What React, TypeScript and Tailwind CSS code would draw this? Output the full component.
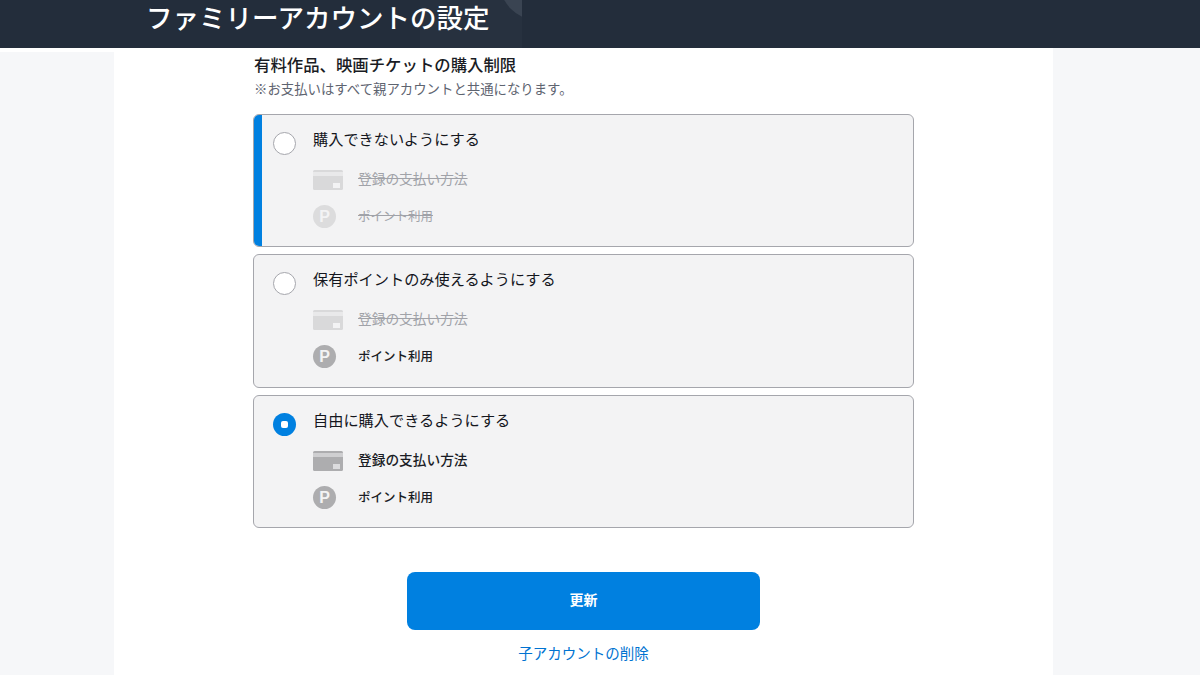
import React from 'react';

const fuente = { fontFamily: '"Noto Sans CJK JP", "Liberation Sans", sans-serif' };

const IconoTarjeta = ({ color, franja, chip }: { color: string; franja: string; chip: string }) => (
  <svg width="30" height="20" viewBox="0 0 30 20" className="shrink-0">
    <rect x="0" y="0" width="30" height="20" rx="1.5" fill={color} />
    <rect x="0" y="2" width="30" height="4" fill={franja} />
    <rect x="20" y="13" width="7" height="5" fill={chip} />
  </svg>
);

const IconoPuntos = ({ color }: { color: string }) => (
  <div className={`w-[23px] h-[23px] rounded-full flex items-center justify-center shrink-0 text-[16px] font-bold leading-none text-[#f3f3f4] ${color}`} style={{ fontFamily: '"Liberation Sans", sans-serif' }}>
    P
  </div>
);

const Linea = ({ texto, activo, tarjeta }: { texto: string; activo: boolean; tarjeta?: boolean }) => (
  <div className={`flex items-center ${tarjeta ? 'h-[20px]' : 'h-[23px]'}`}>
    <div className="w-[30px] flex justify-start shrink-0">
      {tarjeta ? (
        activo ? <IconoTarjeta color="#adadaf" franja="#cfcfd1" chip="#dcdcde" /> : <IconoTarjeta color="#d9d9da" franja="#e9e9ea" chip="#f3f3f4" />
      ) : (
        <IconoPuntos color={activo ? 'bg-[#adadaf]' : 'bg-[#dcdcdd]'} />
      )}
    </div>
    <span className={`ml-[15px] leading-none ${tarjeta ? 'text-[13.7px] -mt-[2px]' : 'text-[12.5px]'} ${activo ? 'text-[#1a1c24] font-medium' : 'text-[#a0a2a8] line-through'}`}>{texto}</span>
  </div>
);

const Opcion = ({ titulo, tarjeta, puntos, seleccionado, marcado, alto }: { titulo: string; tarjeta: boolean; puntos: boolean; seleccionado?: boolean; marcado?: boolean; alto: string }) => (
  <div className={`relative ${alto} bg-[#f3f3f4] border border-[#a5a6ac] rounded-[6px] overflow-hidden pl-[19px] pt-[17px]`}>
    {seleccionado && <div className="absolute left-0 top-0 bottom-0 w-[8px] bg-[#0080e0]" />}
    <div className="flex items-start h-[38px]">
      {marcado ? (
        <div className="w-[23px] h-[23px] rounded-full bg-[#0080e0] flex items-center justify-center shrink-0">
          <div className="w-[7px] h-[7px] rounded-[2px] bg-white" />
        </div>
      ) : (
        <div className="w-[23px] h-[23px] rounded-full bg-white border border-[#a5a6ac] shrink-0" />
      )}
      <span className="ml-[17px] -mt-[3px] text-[15.2px] leading-[18px] text-[#14161d]">{titulo}</span>
    </div>
    <div className="ml-[40px] flex flex-col gap-[15px]">
      <Linea texto="登録の支払い方法" activo={tarjeta} tarjeta />
      <Linea texto="ポイント利用" activo={puntos} />
    </div>
  </div>
);

export default function App() {
  return (
    <div className="w-[1200px] h-[675px] overflow-hidden bg-[#f6f7f9] flex flex-col" style={fuente}>
      <header className="relative h-[48px] bg-[#232d3b] shrink-0 pl-[146px]">
        <div className="absolute left-[420px] top-0 w-[102px] h-[48px] bg-[#27313f]" />
        <svg className="absolute left-[500px] top-0" width="22" height="20" viewBox="0 0 22 20">
          <circle cx="40" cy="-20" r="41" fill="#3a4452" />
        </svg>
        <h1 className="relative text-[26.5px] leading-[33px] font-medium text-white">ファミリーアカウントの設定</h1>
      </header>
      <div className="flex flex-1">
        <div className="w-[114px] shrink-0">
          <div className="h-[4px] bg-white" />
        </div>
        <main className="w-[939px] bg-white pl-[139px]">
          <div className="w-[661px]">
            <h2 className="mt-[5px] ml-px text-[16.4px] leading-[22px] font-medium text-[#1a1c24]">有料作品、映画チケットの購入制限</h2>
            <p className="mt-[3px] ml-px text-[13.4px] leading-[20px] text-[#5e6470]">※お支払いはすべて親アカウントと共通になります。</p>
            <div className="mt-[16px] flex flex-col gap-[7px]">
              <Opcion alto="h-[133px]" titulo="購入できないようにする" tarjeta={false} puntos={false} seleccionado />
              <Opcion alto="h-[134px]" titulo="保有ポイントのみ使えるようにする" tarjeta={false} puntos />
              <Opcion alto="h-[133px]" titulo="自由に購入できるようにする" tarjeta puntos marcado />
            </div>
            <button className="block ml-[154px] mt-[44px] w-[353px] h-[58px] pb-[3px] rounded-[8px] bg-[#0080e0] text-white text-[14px] font-bold">更新</button>
            <a className="block text-center mt-[12px] text-[14.5px] leading-[22px] text-[#0073d1]">子アカウントの削除</a>
          </div>
        </main>
      </div>
    </div>
  );
}
